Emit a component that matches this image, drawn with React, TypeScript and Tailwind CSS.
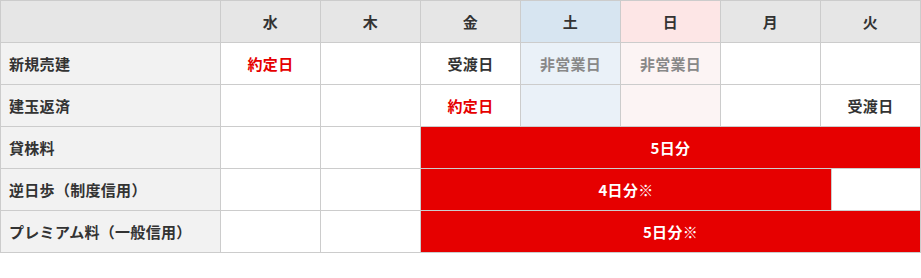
import React from "react";

const days = ["水", "木", "金", "土", "日", "月", "火"];

const cell = "border border-[#cccccc] h-[42px] p-0 text-center align-middle";
const head = "border border-[#cccccc] h-[42px] p-0 text-left align-middle pl-[8px] bg-[#f2f2f2]";

function dayHeadBg(d: string) {
  if (d === "土") return "bg-[#d7e5f1]";
  if (d === "日") return "bg-[#fde6e6]";
  return "bg-[#e6e6e6]";
}

function dayBodyBg(d: string) {
  if (d === "土") return "bg-[#eaf1f8]";
  if (d === "日") return "bg-[#fcf4f4]";
  return "bg-white";
}

type Mark = { text: string; tone: "red" | "dark" | "gray" } | null;

function Row({ label, marks }: { label: string; marks: Mark[] }) {
  return (
    <tr>
      <td className={head}>{label}</td>
      {days.map((d, i) => {
        const m = marks[i];
        const tone =
          m?.tone === "red" ? "text-[#e60000]" : m?.tone === "gray" ? "text-[#888888]" : "text-[#333333]";
        return (
          <td key={d} className={`${cell} ${dayBodyBg(d)} ${tone}`}>
            {m ? m.text : null}
          </td>
        );
      })}
    </tr>
  );
}

export default function App() {
  return (
    <div className="bg-white w-[921px] h-[278px]">
      <table
        className="border-collapse table-fixed w-[920px] text-[15px] font-bold text-[#333333] leading-none tracking-[0.3px]"
        style={{ fontFamily: '"Noto Sans CJK JP", "Noto Sans", sans-serif' }}
      >
        <colgroup>
          <col className="w-[220px]" />
          {days.map((d) => (
            <col key={d} className="w-[100px]" />
          ))}
        </colgroup>
        <thead>
          <tr>
            <th className="border border-[#cccccc] h-[42px] p-0 bg-[#e6e6e6]" />
            {days.map((d) => (
              <th key={d} className={`${cell} ${dayHeadBg(d)} font-bold`}>
                {d}
              </th>
            ))}
          </tr>
        </thead>
        <tbody>
          <Row
            label="新規売建"
            marks={[
              { text: "約定日", tone: "red" },
              null,
              { text: "受渡日", tone: "dark" },
              { text: "非営業日", tone: "gray" },
              { text: "非営業日", tone: "gray" },
              null,
              null,
            ]}
          />
          <Row
            label="建玉返済"
            marks={[null, null, { text: "約定日", tone: "red" }, null, null, null, { text: "受渡日", tone: "dark" }]}
          />
          <tr>
            <td className={head}>貸株料</td>
            <td className={`${cell} bg-white`} />
            <td className={`${cell} bg-white`} />
            <td colSpan={5} className={`${cell} bg-[#e60000] text-white`}>
              5日分
            </td>
          </tr>
          <tr>
            <td className={head}>逆日歩（制度信用）</td>
            <td className={`${cell} bg-white`} />
            <td className={`${cell} bg-white`} />
            <td colSpan={5} className={`${cell} bg-white`}>
              <div className="flex h-[41px]">
                <div className="w-[411px] bg-[#e60000] text-white border-r border-[#cccccc] flex items-center justify-center">
                  4日分※
                </div>
              </div>
            </td>
          </tr>
          <tr>
            <td className={head}>プレミアム料（一般信用）</td>
            <td className={`${cell} bg-white`} />
            <td className={`${cell} bg-white`} />
            <td colSpan={5} className={`${cell} bg-[#e60000] text-white`}>
              5日分※
            </td>
          </tr>
        </tbody>
      </table>
    </div>
  );
}
